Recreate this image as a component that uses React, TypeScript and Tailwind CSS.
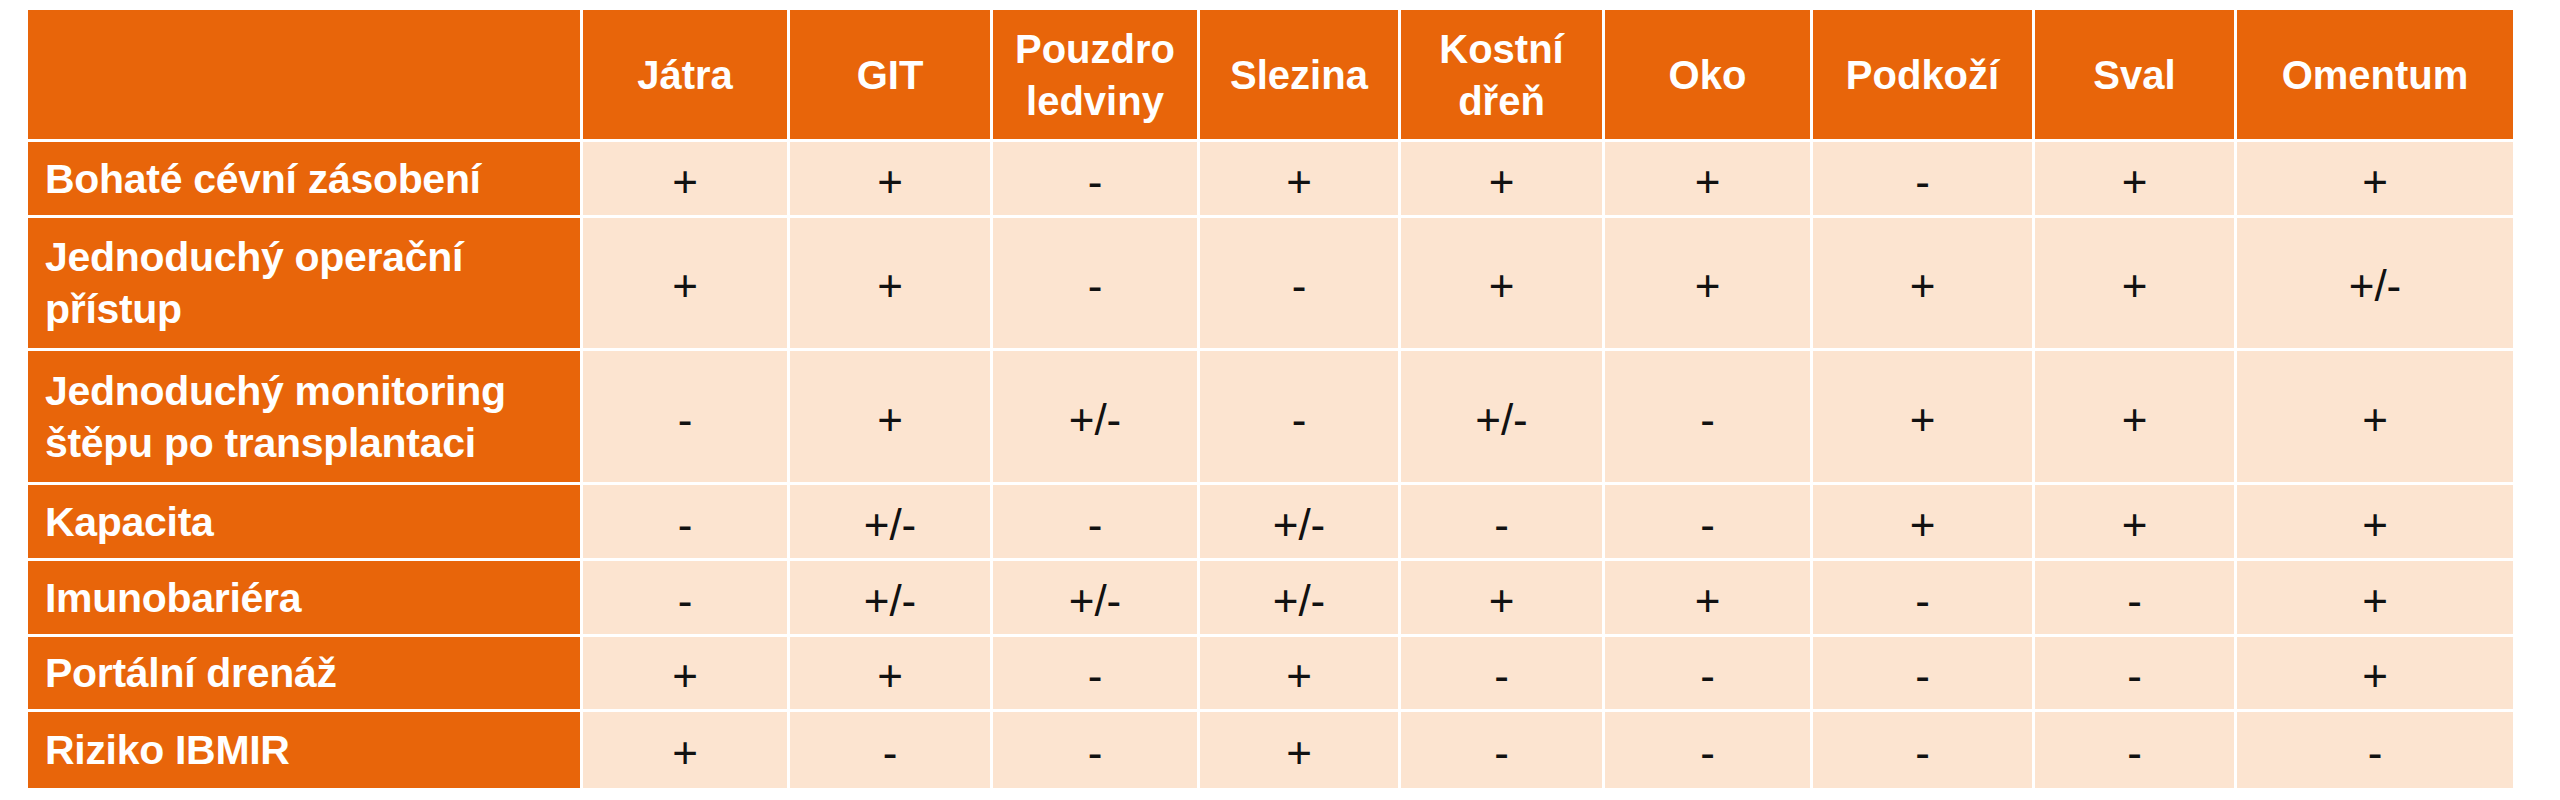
const headers: string[][] = [
  ['Játra'],
  ['GIT'],
  ['Pouzdro', 'ledviny'],
  ['Slezina'],
  ['Kostní', 'dřeň'],
  ['Oko'],
  ['Podkoží'],
  ['Sval'],
  ['Omentum'],
]

const rows: { label: string[]; values: string[] }[] = [
  { label: ['Bohaté cévní zásobení'], values: ['+', '+', '-', '+', '+', '+', '-', '+', '+'] },
  { label: ['Jednoduchý operační', 'přístup'], values: ['+', '+', '-', '-', '+', '+', '+', '+', '+/-'] },
  {
    label: ['Jednoduchý monitoring', 'štěpu po transplantaci'],
    values: ['-', '+', '+/-', '-', '+/-', '-', '+', '+', '+'],
  },
  { label: ['Kapacita'], values: ['-', '+/-', '-', '+/-', '-', '-', '+', '+', '+'] },
  { label: ['Imunobariéra'], values: ['-', '+/-', '+/-', '+/-', '+', '+', '-', '-', '+'] },
  { label: ['Portální drenáž'], values: ['+', '+', '-', '+', '-', '-', '-', '-', '+'] },
  { label: ['Riziko IBMIR'], values: ['+', '-', '-', '+', '-', '-', '-', '-', '-'] },
]

const lines = (parts: string[]) =>
  parts.map((p, i) => (
    <span key={i} className="block">
      {p}
    </span>
  ))

export default function App() {
  return (
    <div className="min-h-[800px] bg-white pl-[28px] pt-[10px] font-['Liberation_Sans',Arial,sans-serif]">
      <div className="grid w-fit grid-cols-[552px_204px_200px_204px_198px_201px_205px_219px_199px_276px] grid-rows-[129px_73px_130px_131px_73px_73px_72px_76px] gap-[3px] bg-white">
        <div className="bg-[#e8650a]" />
        {headers.map((h, i) => (
          <div
            key={i}
            className="flex items-center justify-center bg-[#e8650a] text-center text-[40px] font-bold leading-[52px] text-white"
          >
            <div>{lines(h)}</div>
          </div>
        ))}

        {rows.map((row, r) => (
          <div key={r} className="contents">
            <div className="flex items-center bg-[#e8650a] pl-[17px] text-[41px] font-bold leading-[52px] tracking-[-0.3px] text-white">
              <div>{lines(row.label)}</div>
            </div>
            {row.values.map((v, c) => (
              <div
                key={c}
                className="flex items-center justify-center bg-[#fce4d0] pt-[6px] text-[44px] text-[#111]"
              >
                {v}
              </div>
            ))}
          </div>
        ))}
      </div>
    </div>
  )
}
